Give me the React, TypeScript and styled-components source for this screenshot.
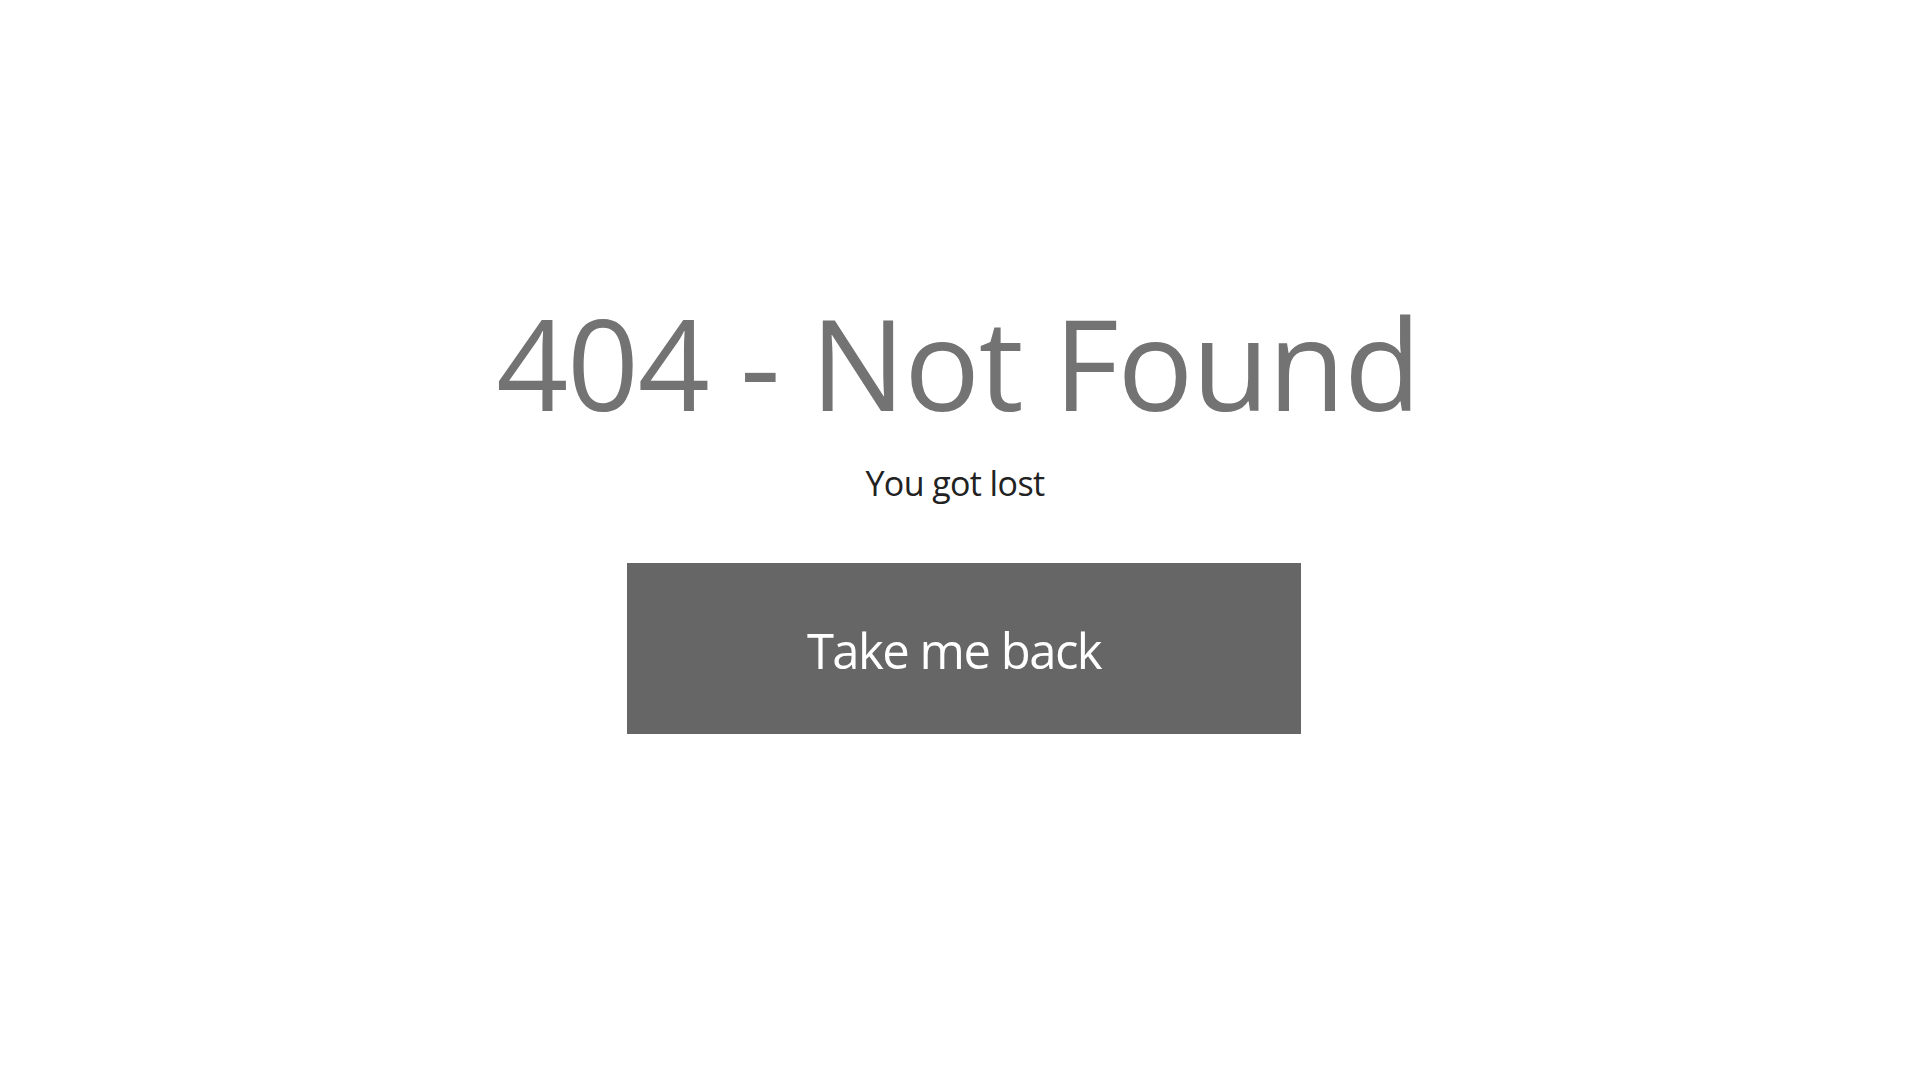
import React from "react";
import styled, { createGlobalStyle } from "styled-components";

const GlobalStyle = createGlobalStyle`
  html, body {
    margin: 0;
    padding: 0;
    background: #ffffff;
  }
  body {
    font-family: "Open Sans", "Noto Sans", sans-serif;
  }
`;

const Page = styled.main`
  min-height: 100vh;
  box-sizing: border-box;
  display: flex;
  flex-direction: column;
  align-items: center;
  padding: 299px 10px 0 0;
`;

const Title = styled.h1`
  margin: 0 0 0 6px;
  font-size: 126px;
  line-height: 1;
  font-weight: 400;
  letter-spacing: -1.3px;
  color: #737373;
  white-space: nowrap;
`;

const Subtitle = styled.p`
  margin: 41px 0 0;
  font-size: 34px;
  line-height: 1;
  font-weight: 400;
  letter-spacing: -0.6px;
  color: #222222;
`;

const BackButton = styled.button`
  margin: 63px 0 0 18px;
  width: 674px;
  height: 171px;
  padding: 3px 20px 0 0;
  border: none;
  border-radius: 0;
  background: #666666;
  color: #ffffff;
  font-family: "Open Sans", "Noto Sans", sans-serif;
  font-size: 49px;
  line-height: 1;
  letter-spacing: -1.5px;
  cursor: pointer;
  display: flex;
  align-items: center;
  justify-content: center;
`;

export default function App() {
  return (
    <>
      <GlobalStyle />
      <Page>
        <Title>404 - Not Found</Title>
        <Subtitle>You got lost</Subtitle>
        <BackButton type="button">Take me back</BackButton>
      </Page>
    </>
  );
}
